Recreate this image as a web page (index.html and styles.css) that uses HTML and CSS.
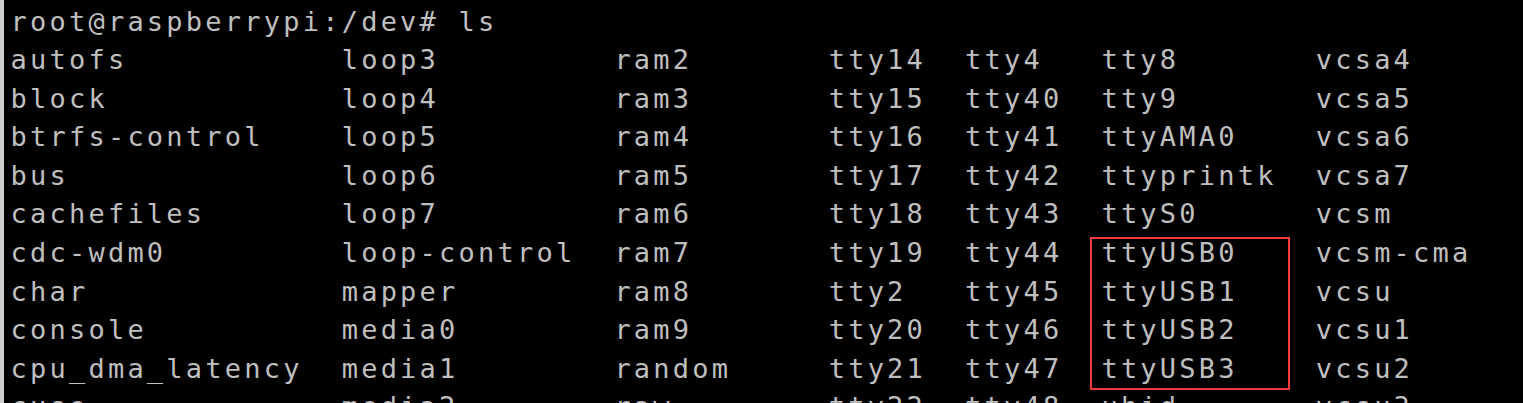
FILE: index.html
```html
<!DOCTYPE html>
<html lang="en">
<head>
<meta charset="utf-8">
<title>root@raspberrypi: /dev</title>
<link rel="stylesheet" href="styles.css">
</head>
<body>
<main class="terminal">
<pre class="screen">root@raspberrypi:/dev# ls
autofs           loop3         ram2       tty14  tty4   tty8       vcsa4
block            loop4         ram3       tty15  tty40  tty9       vcsa5
btrfs-control    loop5         ram4       tty16  tty41  ttyAMA0    vcsa6
bus              loop6         ram5       tty17  tty42  ttyprintk  vcsa7
cachefiles       loop7         ram6       tty18  tty43  ttyS0      vcsm
cdc-wdm0         loop-control  ram7       tty19  tty44  ttyUSB0    vcsm-cma
char             mapper        ram8       tty2   tty45  ttyUSB1    vcsu
console          media0        ram9       tty20  tty46  ttyUSB2    vcsu1
cpu_dma_latency  media1        random     tty21  tty47  ttyUSB3    vcsu2
cuse             media2        raw        tty22  tty48  uhid       vcsu3</pre>
<div class="highlight" aria-hidden="true"></div>
</main>
</body>
</html>
```

FILE: styles.css
```css
html, body {
  margin: 0;
  padding: 0;
  background: #000;
  height: 100%;
  overflow: hidden;
}

.terminal {
  position: relative;
  height: 403px;
  border-left: 4px solid #cfcfcf;
  box-sizing: border-box;
  background: #000;
  overflow: hidden;
}

.screen {
  margin: 0;
  padding: 2.5px 0 0 6.5px;
  font-family: "DejaVu Sans Mono", monospace;
  font-size: 27px;
  line-height: 38.6px;
  letter-spacing: 3.225px;
  color: #bfbfbf;
  white-space: pre;
}

.highlight {
  position: absolute;
  left: 1086px;
  top: 237px;
  width: 200px;
  height: 153px;
  border: 2px solid #f23b3b;
  box-sizing: border-box;
}
```
